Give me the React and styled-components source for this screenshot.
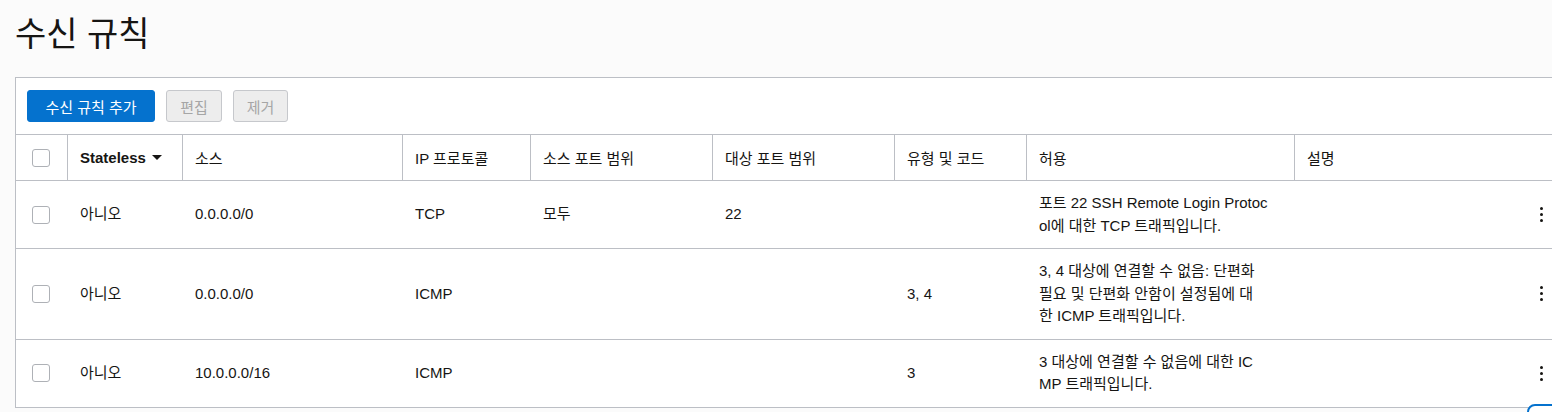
import React from "react";
import styled, { createGlobalStyle } from "styled-components";

const GlobalStyle = createGlobalStyle`
  html, body { margin: 0; padding: 0; }
  body {
    background: #fbfbfb;
    font-family: "Liberation Sans", "Noto Sans CJK KR", sans-serif;
    color: #161513;
    overflow: hidden;
  }
  * { box-sizing: border-box; }
`;

const Page = styled.div`
  padding: 14px 0 0 15px;
  width: 1553px;
`;

const Title = styled.h1`
  margin: 0 0 23px 0;
  font-size: 34px;
  line-height: 40px;
  font-weight: 400;
  color: #161513;
`;

const Panel = styled.div`
  background: #ffffff;
  border: 1px solid #bcbfc5;
  border-right: none;
  border-bottom: none;
  width: 1553px;
`;

const Toolbar = styled.div`
  display: flex;
  gap: 11px;
  padding: 12px 11px;
  border-bottom: 1px solid #bcbfc5;
`;

const Button = styled.button`
  height: 32px;
  padding: 0 ${(p) => (p.$primary ? "17.5px" : "13px")};
  font-family: inherit;
  font-size: 15px;
  border-radius: 3px;
  border: 1px solid ${(p) => (p.$primary ? "#0572ce" : "#c6c8cc")};
  background: ${(p) => (p.$primary ? "#0572ce" : "#ededed")};
  color: ${(p) => (p.$primary ? "#ffffff" : "#a6a6a6")};
  cursor: ${(p) => (p.disabled ? "default" : "pointer")};
`;

const cols = "51px 115px 220px 128px 182px 182px 132px 268px 1fr 54px";

const HeaderRow = styled.div`
  display: grid;
  grid-template-columns: ${cols};
  height: 46px;
  border-bottom: 1px solid #bcbfc5;
`;

const HeadCell = styled.div`
  display: flex;
  align-items: center;
  padding: 0 12px;
  font-size: 15px;
  font-weight: ${(p) => (p.$bold ? 700 : 400)};
  border-left: ${(p) => (p.$noBorder ? "none" : "1px solid #bcbfc5")};
  white-space: nowrap;
`;

const CheckCell = styled.div`
  display: flex;
  align-items: center;
  padding-left: 16px;
`;

const Checkbox = styled.span`
  display: inline-block;
  width: 18px;
  height: 18px;
  border: 1px solid #aeb1b6;
  border-radius: 3px;
  background: #fff;
`;

const SortArrow = styled.span`
  display: inline-block;
  margin-left: 6px;
  width: 0;
  height: 0;
  border-left: 5px solid transparent;
  border-right: 5px solid transparent;
  border-top: 5px solid #161513;
`;

const Row = styled.div`
  display: grid;
  grid-template-columns: ${cols};
  border-bottom: 1px solid #bcbfc5;
  align-items: center;
`;

const Cell = styled.div`
  padding: 11px 12px 11px 13px;
  font-size: 15px;
  line-height: 22.5px;
`;

const Line = styled.span`
  display: block;
  white-space: nowrap;
`;

const Kebab = styled.div`
  display: flex;
  flex-direction: column;
  align-items: center;
  gap: 3px;
  & > span {
    width: 3px;
    height: 3px;
    border-radius: 50%;
    background: #161513;
  }
`;

const FloatingButton = styled.div`
  position: fixed;
  left: 1527px;
  top: 404px;
  width: 44px;
  height: 44px;
  border: 2px solid #0572ce;
  border-radius: 8px;
  background: #ffffff;
`;

const rules = [
  {
    src: "0.0.0.0/0",
    proto: "TCP",
    srcPort: "모두",
    dstPort: "22",
    type: "",
    allow: ["포트 22 SSH Remote Login Protoc", "ol에 대한 TCP 트래픽입니다."],
  },
  {
    src: "0.0.0.0/0",
    proto: "ICMP",
    srcPort: "",
    dstPort: "",
    type: "3, 4",
    allow: [
      "3, 4 대상에 연결할 수 없음: 단편화",
      "필요 및 단편화 안함이 설정됨에 대",
      "한 ICMP 트래픽입니다.",
    ],
  },
  {
    src: "10.0.0.0/16",
    proto: "ICMP",
    srcPort: "",
    dstPort: "",
    type: "3",
    allow: ["3 대상에 연결할 수 없음에 대한 IC", "MP 트래픽입니다."],
  },
];

export default function App() {
  return (
    <>
      <GlobalStyle />
      <Page>
        <Title>수신 규칙</Title>
        <Panel>
          <Toolbar>
            <Button $primary>수신 규칙 추가</Button>
            <Button disabled>편집</Button>
            <Button disabled>제거</Button>
          </Toolbar>
          <HeaderRow>
            <CheckCell>
              <Checkbox />
            </CheckCell>
            <HeadCell $bold>
              Stateless
              <SortArrow />
            </HeadCell>
            <HeadCell>소스</HeadCell>
            <HeadCell>IP 프로토콜</HeadCell>
            <HeadCell>소스 포트 범위</HeadCell>
            <HeadCell>대상 포트 범위</HeadCell>
            <HeadCell>유형 및 코드</HeadCell>
            <HeadCell>허용</HeadCell>
            <HeadCell>설명</HeadCell>
            <HeadCell $noBorder />
          </HeaderRow>
          {rules.map((r, i) => (
            <Row key={i}>
              <CheckCell>
                <Checkbox />
              </CheckCell>
              <Cell>아니오</Cell>
              <Cell>{r.src}</Cell>
              <Cell>{r.proto}</Cell>
              <Cell>{r.srcPort}</Cell>
              <Cell>{r.dstPort}</Cell>
              <Cell>{r.type}</Cell>
              <Cell>
                {r.allow.map((l, j) => (
                  <Line key={j}>{l}</Line>
                ))}
              </Cell>
              <Cell />
              <Kebab>
                <span />
                <span />
                <span />
              </Kebab>
            </Row>
          ))}
        </Panel>
      </Page>
      <FloatingButton />
    </>
  );
}
